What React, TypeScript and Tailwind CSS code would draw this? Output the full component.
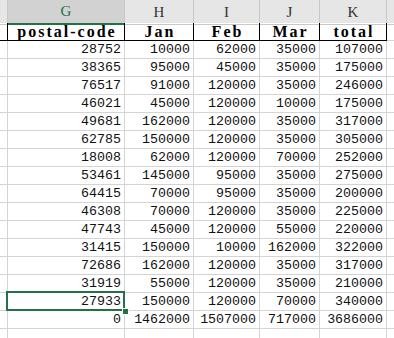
import React from "react";

const rows: number[][] = [
  [28752, 10000, 62000, 35000, 107000],
  [38365, 95000, 45000, 35000, 175000],
  [76517, 91000, 120000, 35000, 246000],
  [46021, 45000, 120000, 10000, 175000],
  [49681, 162000, 120000, 35000, 317000],
  [62785, 150000, 120000, 35000, 305000],
  [18008, 62000, 120000, 70000, 252000],
  [53461, 145000, 95000, 35000, 275000],
  [64415, 70000, 95000, 35000, 200000],
  [46308, 70000, 120000, 35000, 225000],
  [47743, 45000, 120000, 55000, 220000],
  [31415, 150000, 10000, 162000, 322000],
  [72686, 162000, 120000, 35000, 317000],
  [31919, 55000, 120000, 35000, 210000],
  [27933, 150000, 120000, 70000, 340000],
  [0, 1462000, 1507000, 717000, 3686000],
];

const letters = ["G", "H", "I", "J", "K"];
const titles = ["postal-code", "Jan", "Feb", "Mar", "total"];

const gridCols = "grid grid-cols-[8px_117px_69px_66px_60px_67px_1fr]";

export default function App() {
  return (
    <div className="w-[394px] h-[338px] overflow-hidden bg-white text-black">
      {/* column letters */}
      <div className={`${gridCols} h-[23px] bg-[#e6e6e6] font-[family-name:'Liberation_Serif',serif] text-[15px]`}>
        <div className="border-r border-[#c8c8c8] border-b border-b-[#c8c8c8]" />
        {letters.map((l, i) => (
          <div
            key={l}
            className={
              i === 0
                ? "flex items-center justify-center border-r border-[#c8c8c8] bg-[#d2d2d2] border-b-2 border-b-[#217346] text-[#217346]"
                : "flex items-center justify-center border-r border-[#c8c8c8] border-b border-b-[#c8c8c8] text-[#333]"
            }
          >
            {l}
          </div>
        ))}
        <div className="border-b border-[#c8c8c8]" />
      </div>

      {/* header row */}
      <div className={`${gridCols} h-[18px] font-[family-name:'Liberation_Serif',serif] text-[16px] font-bold tracking-[2px]`}>
        <div className="border-r border-black border-b border-b-black" />
        {titles.map((t) => (
          <div key={t} className="flex items-center justify-center pl-[2px] border-r border-b border-black leading-none">
            {t}
          </div>
        ))}
        <div className="border-b border-[#d4d4d4]" />
      </div>

      {/* data */}
      {rows.map((r, ri) => (
        <div key={ri} className={`${gridCols} h-[18px] font-[family-name:'Liberation_Mono',monospace] text-[13.3px] text-[#111]`}>
          <div className="border-r border-b border-[#d4d4d4]" />
          {r.map((v, ci) => (
            <div
              key={ci}
              className="relative flex items-center justify-end pr-[3px] border-r border-b border-[#d4d4d4] leading-none"
            >
              {v}
              {ri === 14 && ci === 0 && (
                <>
                  <div className="absolute z-10 left-[-2px] top-[-2px] right-[-1px] bottom-[-1px] border-2 border-[#217346]" />
                  <div className="absolute z-20 right-[-5px] bottom-[-5px] w-[7px] h-[7px] bg-[#217346] border border-white" />
                </>
              )}
            </div>
          ))}
          <div className="border-b border-[#d4d4d4]" />
        </div>
      ))}

      {/* empty row */}
      <div className={`${gridCols} h-[18px]`}>
        <div className="border-r border-[#d4d4d4]" />
        {letters.map((l) => (
          <div key={l} className="border-r border-[#d4d4d4]" />
        ))}
        <div />
      </div>
    </div>
  );
}
